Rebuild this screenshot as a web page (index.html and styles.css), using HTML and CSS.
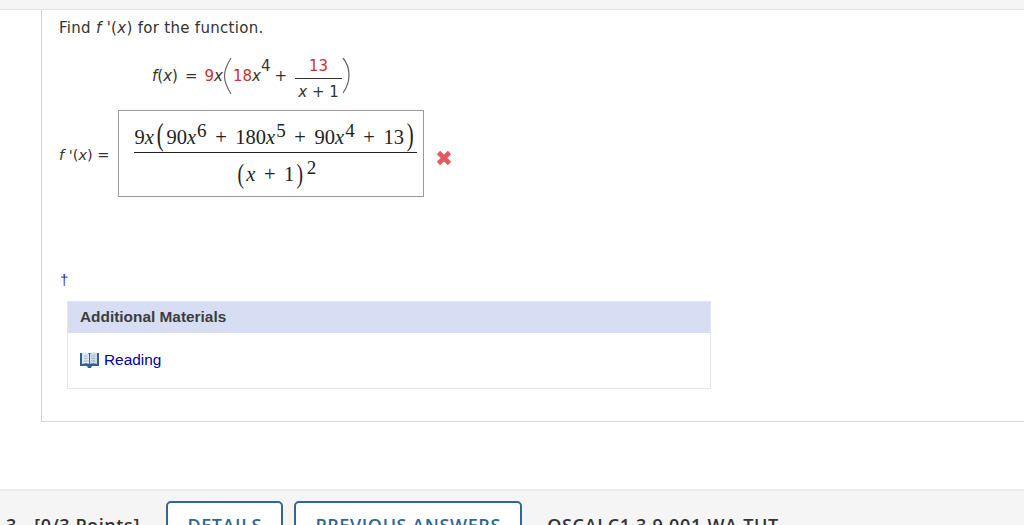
FILE: index.html
```html
<!DOCTYPE html>
<html lang="en">
<head>
<meta charset="utf-8">
<title>Find f'(x)</title>
<link rel="stylesheet" href="styles.css">
</head>
<body>
<div class="topband"></div>
<main class="panel">
  <p class="prompt">Find <i>f</i> '(<i>x</i>) for the function.</p>
  <div class="given">
    <span><i>f</i>(<i>x</i>)</span><span class="eq">=</span><span class="red">9</span><i>x</i>
    <svg class="bracket" width="10" height="38" viewBox="0 0 10 38"><path d="M8 1C3 9 1.500 14 1.500 19S3 29 8 37" fill="none" stroke="#666" stroke-width="1.200"/></svg>
    <span class="red">18</span><i>x</i><sup class="sup">4</sup><span class="plus">+</span>
    <span class="frac">
      <span class="num red">13</span>
      <span class="den"><i>x</i> + 1</span>
    </span>
    <svg class="bracket-r" width="8" height="38" viewBox="0 0 8 38"><path d="M1 1c5 6 6 11 6 17s-1 11-6 18" fill="none" stroke="#666" stroke-width="1.200"/></svg>
  </div>
  <div class="answer-row">
    <span class="answer-label"><i>f</i> '(<i>x</i>) =</span>
    <div class="answer-box">
      <div class="m-frac">
        <div class="m-num">9<i>x</i><span class="paren">(</span>90<i>x</i><sup>6</sup> + 180<i>x</i><sup>5</sup> + 90<i>x</i><sup>4</sup> + 13<span class="paren">)</span></div>
        <div class="m-den"><span class="paren-s">(</span><i>x</i> + 1<span class="paren-s">)</span><sup>2</sup></div>
      </div>
    </div>
    <svg class="cross" width="18" height="18" viewBox="0 0 18 18"><path d="M3.500 3.500 14.500 14.500M14.500 3.500 3.500 14.500" fill="none" stroke="#e2595f" stroke-width="4.600"/></svg>
  </div>
  <div class="dagger">†</div>
  <section class="materials">
    <h2 class="materials-head">Additional Materials</h2>
    <div class="materials-body">
      <svg class="book" width="21" height="18" viewBox="0 0 21 18">
        <path d="M1 2h19v13h-7l-1 2H9l-1-2H1z" fill="#35608c"/>
        <path d="M3 2c3-1 5-1 7 1v10c-2-1-4-1-7 0z" fill="#dfe9f2"/>
        <path d="M18 2c-3-1-5-1-7 1v10c2-1 4-1 7 0z" fill="#cddbe8"/>
        <path d="M5 5h3.500M5 7.500h3.500M5 10h3.500M12.500 5H16M12.500 7.500H16M12.500 10H16" stroke="#8aa3bb" stroke-width=".8"/>
      </svg>
      <a class="reading" href="#">Reading</a>
    </div>
  </section>
</main>
<footer class="next">
  <span class="qnum">3.</span>
  <span class="points">[0/3 Points]</span>
  <a class="btn btn-details" href="#">DETAILS</a>
  <a class="btn btn-prev" href="#">PREVIOUS ANSWERS</a>
  <span class="code">OSCALC1 3.9.001.WA.TUT</span>
</footer>
</body>
</html>
```
FILE: styles.css
```css
html, body {
  margin: 0;
  padding: 0;
  height: 525px;
  overflow: hidden;
  background: #fff;
}
body {
  font-family: "DejaVu Sans", sans-serif;
  color: #333;
  font-size: 15px;
}
.topband {
  height: 9px;
  background: #f5f5f5;
  border-bottom: 1px solid #e2e2e2;
}
.panel {
  margin-left: 41px;
  height: 412px;
  box-sizing: border-box;
  border-left: 1px solid #d2d2d2;
  border-bottom: 1px solid #d8d8d8;
  padding: 9px 0 0 17px;
}
.prompt {
  margin: 0;
  line-height: 18px;
  letter-spacing: .3px;
  font-size: 15px;
}
.given {
  display: flex;
  align-items: center;
  margin: 17px 0 0 93px;
  height: 44px;
  font-size: 15px;
}
.eq { margin: 0 7px; }
.red { color: #c8332e; }
.sup { font-size: 15px; align-self: flex-start; margin: 5px 0 0 0; line-height: 14px; }
.plus { margin: 0 8px 0 4px; }
.frac { display: flex; flex-direction: column; align-items: stretch; text-align: center; margin-top: 7px; }
.num { padding: 0 0 3px; border-bottom: 1px solid #333; line-height: 17px; }
.den { padding: 5px 0 0; line-height: 17px; width: 47px; }
.answer-row {
  display: flex;
  align-items: center;
  margin-top: 12px;
}
.answer-label { width: 59px; font-size: 14.500px; margin-top: 2px; }
.answer-box {
  box-sizing: border-box;
  width: 306px;
  height: 87px;
  border: 1px solid #999;
  padding: 15px 6px 0 15px;
}
.m-frac { font-family: "Liberation Serif", serif; font-size: 20.500px; color: #222; word-spacing: 3.500px; }
.m-num {
  text-align: center;
  border-bottom: 1px solid #222;
  height: 26px;
  line-height: 23px;
  white-space: nowrap;
}
.m-den { text-align: center; line-height: 30px; padding-top: 6px; }
.m-frac sup { font-size: 19px; line-height: 0; vertical-align: 7px; margin-left: 1px; }
.paren {
  display: inline-block;
  font-size: 32px;
  line-height: 0;
  vertical-align: -1px;
  margin: 0 1px;
  transform: scaleX(.65);
}
.paren-s {
  display: inline-block;
  font-size: 28px;
  line-height: 0;
  vertical-align: -2px;
  margin: 0 1px;
  transform: scaleX(.7);
}
.cross { margin: 8px 0 0 11px; }
.dagger {
  margin: 72px 0 0 0;
  height: 32px;
  line-height: 22px;
  color: #3030c0;
  font-family: "Liberation Sans", sans-serif;
  font-size: 15px;
  padding-left: 1px;
}
.materials {
  margin: 0 0 0 8px;
  box-sizing: border-box;
  width: 644px;
  height: 88px;
  border: 1px solid #e3e6f3;
  font-family: "Liberation Sans", sans-serif;
}
.materials-head {
  margin: 0;
  height: 31px;
  line-height: 30px;
  background: #d7ddf3;
  padding-left: 12px;
  font-size: 15.400px;
  font-weight: bold;
  color: #3d3d3d;
}
.materials-body {
  display: flex;
  align-items: center;
  gap: 4px;
  height: 54px;
  padding-left: 11px;
  font-size: 15.400px;
}
.reading { color: #00009e; text-decoration: none; }
.next {
  margin-top: 67px;
  height: 50px;
  overflow: hidden;
  background: #f5f5f5;
  border-top: 2px solid #ebebeb;
  display: flex;
  align-items: flex-start;
  font-family: "Open Sans", sans-serif;
  font-weight: 600;
  font-size: 18px;
  color: #333;
}
.qnum { margin: 22px 0 0 6px; line-height: 24px; }
.points { margin: 22px 0 0 13px; line-height: 24px; letter-spacing: .6px; width: 132px; }
.btn {
  box-sizing: border-box;
  margin-top: 10px;
  height: 50px;
  border: 2px solid #2f6797;
  border-radius: 5px;
  color: #2f6797;
  text-decoration: none;
  text-align: center;
  line-height: 24px;
  padding-top: 10px;
  background: #fff;
  font-size: 18px;
  letter-spacing: .6px;
}
.btn-details { width: 117px; }
.btn-prev { width: 228px; margin-left: 11px; }
.code { margin: 22px 0 0 25px; line-height: 24px; letter-spacing: .65px; }
```
